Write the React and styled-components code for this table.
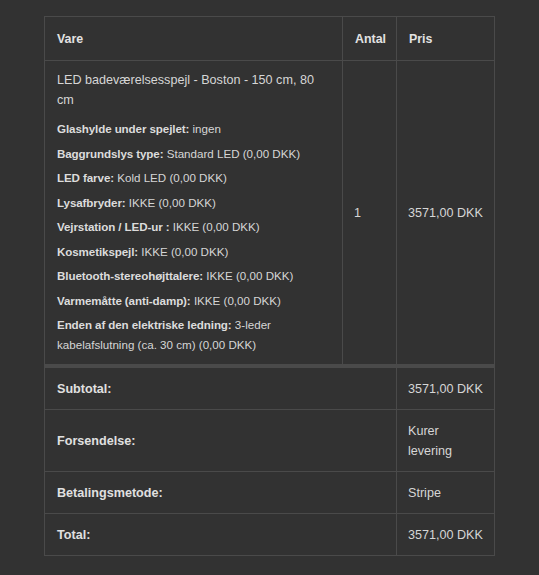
import React from 'react'
import styled, { createGlobalStyle } from 'styled-components'

const GlobalStyle = createGlobalStyle`
  html, body {
    margin: 0;
    padding: 0;
    background-color: #323232;
  }
  body {
    font-family: "Liberation Sans", Arial, sans-serif;
    color: #d6d6d6;
  }
`

const StyledOrderSection = styled.section`
  width: 100%;
  min-height: 575px;
  padding: 16px 0 19px 0;
  box-sizing: border-box;
`

const StyledOrderTable = styled.table`
  width: 450px;
  margin: 0 auto;
  table-layout: fixed;
  border-collapse: collapse;
  border: 1px solid #4a4a4a;
  font-size: 12.6px;
  line-height: 20px;

  th,
  td {
    border: 1px solid #4a4a4a;
    text-align: left;
    vertical-align: middle;
  }
`

const StyledCol = styled.col`
  width: ${(props) => props.$width};
`

const StyledHeadCell = styled.th`
  padding: 12px 8px 11px 12px;
  font-size: 12.4px;
  font-weight: 700;
  color: #e2e2e2;
`

const StyledItemCell = styled.td`
  padding: ${(props) => (props.$top ? '9px 14px 9px 12px' : '9px 8px 9px 11px')};
  vertical-align: ${(props) => (props.$top ? 'top' : 'middle')} !important;
`

const StyledProductName = styled.div`
  margin-bottom: 9px;
`

const StyledMetaList = styled.ul`
  list-style: none;
  margin: 0;
  padding: 0;
  font-size: 11.6px;

  li {
    margin: 0 0 4.5px 0;
  }
  li:last-child {
    margin-bottom: 0;
  }
  strong {
    font-weight: 700;
    letter-spacing: -0.1px;
    color: #dcdcdc;
  }
`

const StyledFootRow = styled.tr`
  ${(props) =>
    props.$first &&
    `
    th, td { border-top: 4px solid #4a4a4a !important; }
  `}
`

const StyledFootLabel = styled.th`
  padding: 10.5px 12px;
  font-weight: 700;
  color: #e0e0e0;
`

const StyledFootValue = styled.td`
  padding: 10.5px 8px 10.5px 11px;
`

const meta = [
  ['Glashylde under spejlet:', 'ingen'],
  ['Baggrundslys type:', 'Standard LED (0,00 DKK)'],
  ['LED farve:', 'Kold LED (0,00 DKK)'],
  ['Lysafbryder:', 'IKKE (0,00 DKK)'],
  ['Vejrstation / LED-ur :', 'IKKE (0,00 DKK)'],
  ['Kosmetikspejl:', 'IKKE (0,00 DKK)'],
  ['Bluetooth-stereohøjttalere:', 'IKKE (0,00 DKK)'],
  ['Varmemåtte (anti-damp):', 'IKKE (0,00 DKK)'],
  ['Enden af den elektriske ledning:', '3-leder kabelafslutning (ca. 30 cm) (0,00 DKK)'],
]

const totals = [
  ['Subtotal:', '3571,00 DKK'],
  ['Forsendelse:', 'Kurer levering'],
  ['Betalingsmetode:', 'Stripe'],
  ['Total:', '3571,00 DKK'],
]

const App = () => {
  return (
    <>
      <GlobalStyle />
      <StyledOrderSection>
        <StyledOrderTable>
          <colgroup>
            <StyledCol $width="298px" />
            <StyledCol $width="54px" />
            <StyledCol $width="98px" />
          </colgroup>
          <thead>
            <tr>
              <StyledHeadCell>Vare</StyledHeadCell>
              <StyledHeadCell>Antal</StyledHeadCell>
              <StyledHeadCell>Pris</StyledHeadCell>
            </tr>
          </thead>
          <tbody>
            <tr>
              <StyledItemCell $top>
                <StyledProductName>LED badeværelsesspejl - Boston - 150 cm, 80 cm</StyledProductName>
                <StyledMetaList>
                  {meta.map(([label, value]) => (
                    <li key={label}>
                      <strong>{label}</strong> {value}
                    </li>
                  ))}
                </StyledMetaList>
              </StyledItemCell>
              <StyledItemCell>1</StyledItemCell>
              <StyledItemCell>3571,00 DKK</StyledItemCell>
            </tr>
          </tbody>
          <tfoot>
            {totals.map(([label, value], i) => (
              <StyledFootRow key={label} $first={i === 0}>
                <StyledFootLabel colSpan={2}>{label}</StyledFootLabel>
                <StyledFootValue>{value}</StyledFootValue>
              </StyledFootRow>
            ))}
          </tfoot>
        </StyledOrderTable>
      </StyledOrderSection>
    </>
  )
}

export default App
